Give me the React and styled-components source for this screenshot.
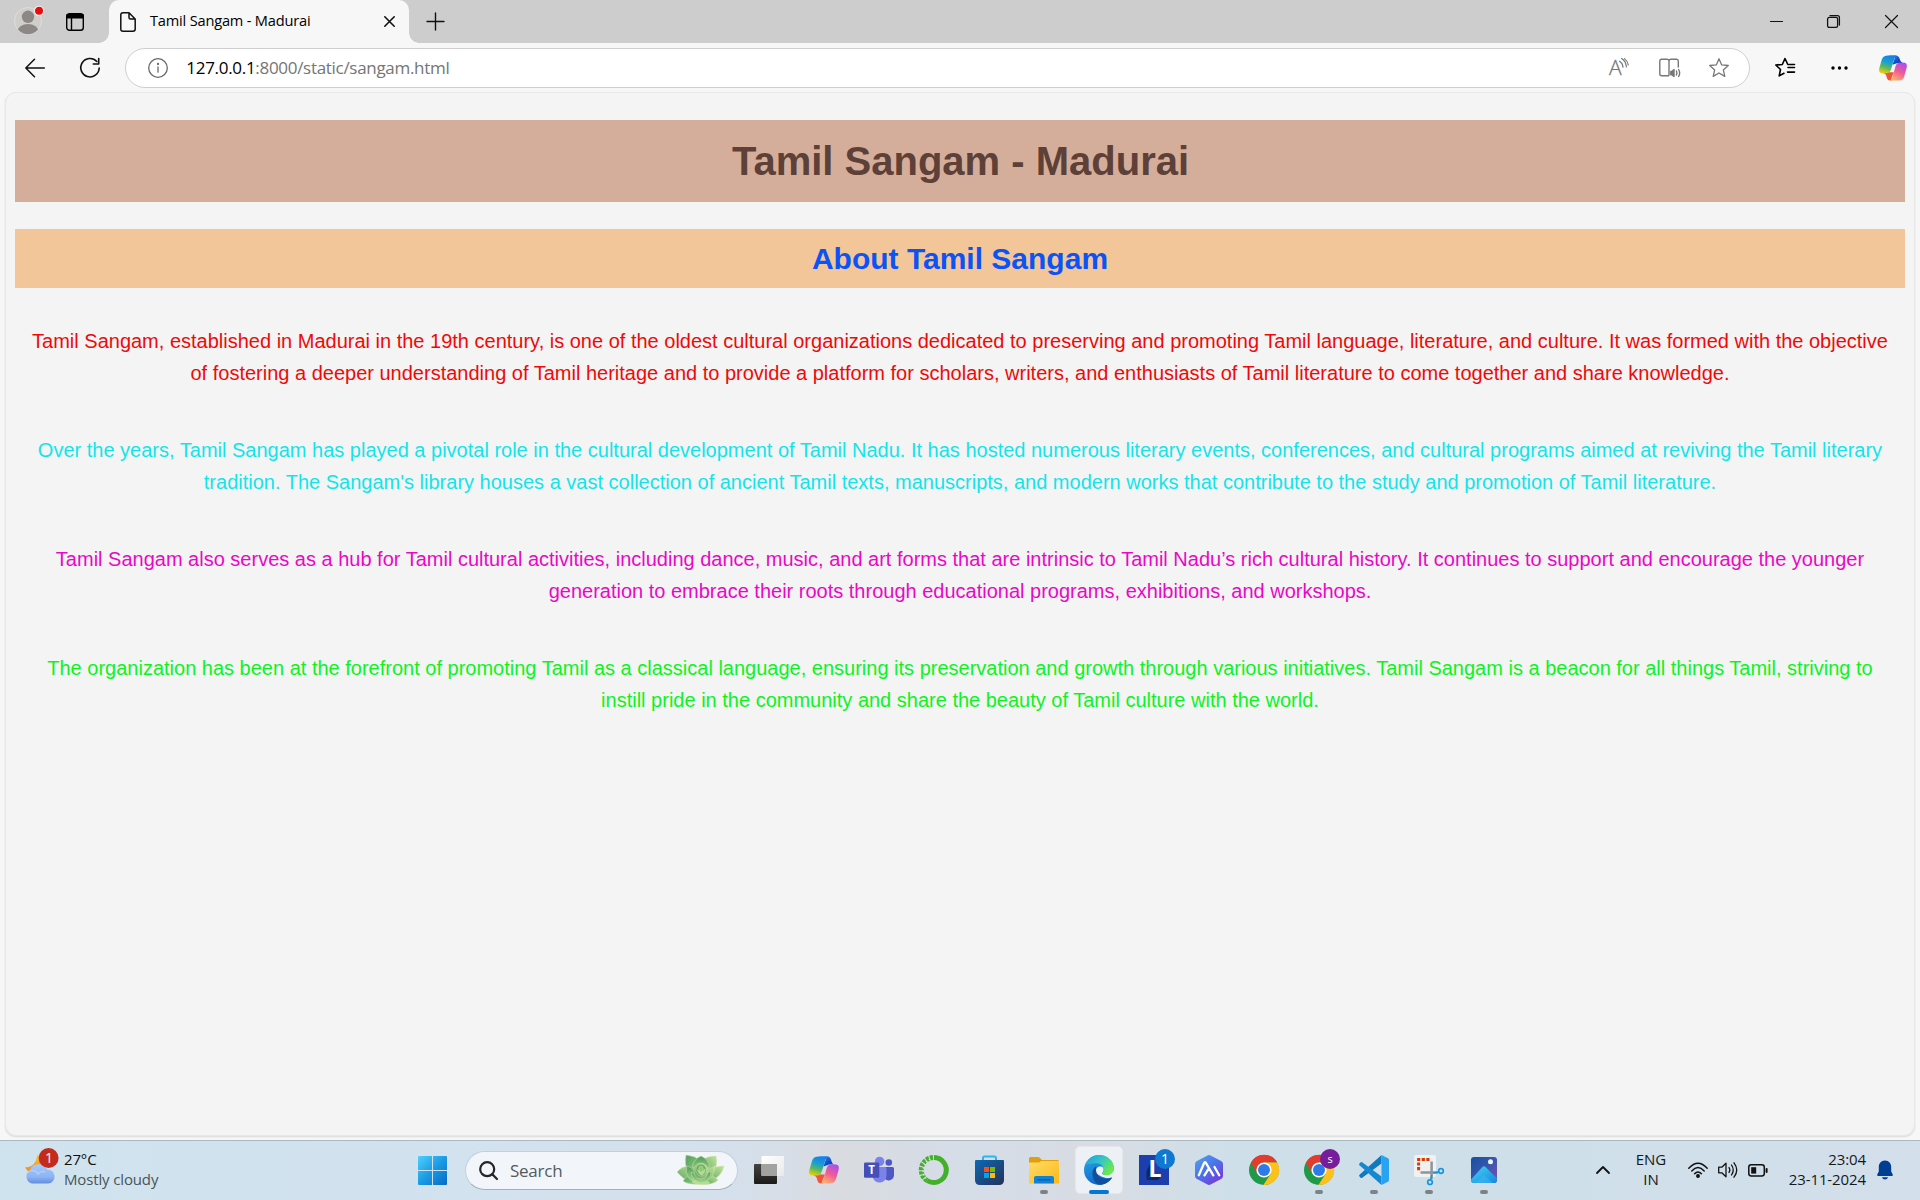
import React from "react";
import styled, { createGlobalStyle } from "styled-components";

const UI_FONT = '"Open Sans", "Noto Sans", sans-serif';

const GlobalStyle = createGlobalStyle`
  * { box-sizing: border-box; }
  body { margin: 0; overflow: hidden; background: #f7f7f7; }
  svg { display: block; flex: none; overflow: visible; }
`;

const Desktop = styled.div`
  width: 1920px;
  height: 1200px;
  display: flex;
  flex-direction: column;
  background: #f7f7f7;
  font-family: ${UI_FONT};
  color: #000;
`;

const TabStrip = styled.header`
  height: 43px;
  display: flex;
  align-items: stretch;
  background: #cdcdcd;
`;

const Cell = styled.div`
  width: ${(p) => p.$w}px;
  flex: none;
  display: flex;
  align-items: center;
  justify-content: center;
`;

const Profile = styled(Cell)`
  margin-left: 7px;
  padding-bottom: 1px;
`;

const Tab = styled.div`
  width: 300px;
  margin-left: 8px;
  padding: 0 14px 0 11px;
  display: flex;
  align-items: center;
  background: #f7f7f7;
  border-radius: 10px 10px 0 0;
  position: relative;
  &::before,
  &::after {
    content: "";
    position: absolute;
    bottom: 0;
    width: 10px;
    height: 10px;
  }
  &::before {
    left: -10px;
    background: radial-gradient(circle at 0 0, transparent 9.5px, #f7f7f7 10px);
  }
  &::after {
    right: -10px;
    background: radial-gradient(circle at 100% 0, transparent 9.5px, #f7f7f7 10px);
  }
`;

const TabTitle = styled.span`
  flex: 1;
  margin-left: 14px;
  padding-bottom: 4px;
  font-size: 14.6px;
  line-height: 20px;
  letter-spacing: -0.19px;
  white-space: nowrap;
`;

const Controls = styled.div`
  margin-left: auto;
  display: flex;
`;

const Toolbar = styled.div`
  height: 49px;
  padding: 0 2px 0 7px;
  display: flex;
  align-items: center;
`;

const AddressBar = styled.div`
  width: 1625px;
  height: 40px;
  flex: none;
  margin: 1px 8px 0 8px;
  padding: 0 5px 0 21.5px;
  display: flex;
  align-items: center;
  background: #fff;
  border: 1px solid #cfcfcf;
  border-radius: 20px;
`;

const Url = styled.span`
  flex: 1;
  margin-left: 18.8px;
  padding-bottom: 1px;
  font-size: 17px;
  line-height: 24px;
  letter-spacing: -0.3px;
  color: #757575;
  white-space: nowrap;
`;

const Host = styled.span`
  color: #000;
`;

const Page = styled.main`
  height: 1044px;
  margin: 0 5px;
  padding: 27px 10px 0;
  background: #f4f4f4;
  border: 1px solid #e8e8e8;
  border-radius: 11px;
  box-shadow: 0 1px 2px rgba(0, 0, 0, 0.12);
  font-family: "Liberation Sans", Arial, sans-serif;
  text-align: center;
`;

const Title = styled.h1`
  margin: 0 -1px 27px;
  padding-left: 1px;
  height: 82px;
  font-size: 40px;
  line-height: 82px;
  color: #5d4037;
  background: #d5ae9b;
`;

const Subtitle = styled.h2`
  margin: 0 -1px 24px;
  height: 59px;
  font-size: 30px;
  line-height: 59px;
  color: #0b53f5;
  background: #f3c69a;
`;

const Paragraph = styled.p`
  margin: 0 0 20px;
  padding: 12.5px 11px;
  font-size: 20px;
  line-height: 32px;
  color: ${(p) => p.$color};
`;

const Taskbar = styled.footer`
  height: 60px;
  margin-top: auto;
  padding-bottom: 1px;
  display: flex;
  align-items: center;
  border-top: 1px solid #a9b8c1;
  background: linear-gradient(90deg, #cfe3ee 0%, #d2e2ee 25%, #d5e0ec 38%, #d9dbe0 44%, #d5dde8 50%, #d8dce3 57%, #cfdfe9 64%, #cfdfea 80%, #d3dfea 100%);
`;

const Weather = styled.div`
  width: 405px;
  flex: none;
  padding: 0 0 6px 25px;
  display: flex;
  align-items: center;
`;

const WeatherText = styled.div`
  margin: 4px 0 0 5px;
  font-size: 15px;
  line-height: 20px;
  color: #4b5459;
  letter-spacing: -0.14px;
`;

const Temp = styled.div`
  color: #111;
`;

const Search = styled.div`
  width: 273px;
  height: 39px;
  flex: none;
  margin: 0 3.5px 0 5px;
  padding: 0 13px 0 12.5px;
  display: flex;
  align-items: center;
  border: 1px solid #c3d0dc;
  border-bottom-color: #a3b0bc;
  border-radius: 20px;
  background: #f2f6fa;
`;

const SearchText = styled.span`
  flex: 1;
  margin-left: 12.5px;
  padding-top: 1px;
  font-size: 17px;
  line-height: 24px;
  letter-spacing: -0.25px;
  color: #555a5e;
`;

const AppButton = styled.div`
  width: 55px;
  height: 58px;
  flex: none;
  display: flex;
  align-items: center;
  justify-content: center;
  position: relative;
`;

const Active = styled.div`
  width: 48px;
  height: 48px;
  display: flex;
  align-items: center;
  justify-content: center;
  border-radius: 5px;
  background: #edf0f4;
  border: 1px solid #e4e7eb;
`;

const Indicator = styled.span`
  position: absolute;
  left: 50%;
  bottom: 5px;
  width: ${(p) => (p.$active ? 20 : 8)}px;
  height: 4px;
  border-radius: 2px;
  transform: translateX(-50%);
  background: ${(p) => (p.$active ? "#0078d4" : "#7c8388")};
`;

const Badge = styled.span`
  position: absolute;
  left: ${(p) => p.$x}px;
  top: 8px;
  width: 20px;
  height: 20px;
  border-radius: 50%;
  background: ${(p) => p.$bg};
  color: #fff;
  font-size: ${(p) => p.$size}px;
  line-height: 19px;
  text-align: center;
`;

const Tray = styled.div`
  margin-left: auto;
  padding-right: 16px;
  display: flex;
  align-items: center;
`;

const TrayText = styled.div`
  width: ${(p) => p.$w}px;
  padding-bottom: 2px;
  text-align: ${(p) => p.$align};
  font-size: 15px;
  line-height: 20px;
  letter-spacing: ${(p) => p.$ls || 0}px;
  color: #16191c;
  white-space: nowrap;
`;

const Language = styled(Cell)`
  margin: 0 9px 0 13px;
`;

const TrayIcons = styled.div`
  display: flex;
  align-items: center;
  gap: 10px;
  margin-right: 18px;
`;

const Line = ({ w = 20, h = w, c = "#111", s = 1.3, box = `0 0 ${w} ${h}`, children }) => (
  <svg width={w} height={h} viewBox={box} fill="none" stroke={c} strokeWidth={s} strokeLinecap="round" strokeLinejoin="round">
    {children}
  </svg>
);

const Avatar = () => (
  <svg width="30" height="30" viewBox="0 0 30 30">
    <defs><clipPath id="av"><circle cx="15" cy="15" r="13.2" /></clipPath></defs>
    <circle cx="15" cy="15" r="13.5" fill="#d0cecb" stroke="#e0deda" />
    <g clipPath="url(#av)" fill="#8c8885"><circle cx="15" cy="10.8" r="6.2" /><ellipse cx="15" cy="25.5" rx="10.5" ry="7.5" /></g>
    <circle cx="26" cy="4.8" r="4.6" fill="#e80c0c" stroke="#ededed" strokeWidth="1.2" />
  </svg>
);

const Copilot = ({ size, id }) => (
  <svg width={size} height={size} viewBox="0 0 30 30">
    <defs>
      <linearGradient id={id + "a"} x1="0.5" y1="0" x2="0.2" y2="1"><stop offset="0" stopColor="#1a7fe8" /><stop offset=".35" stopColor="#16a0d0" /><stop offset=".65" stopColor="#5cb860" /><stop offset="1" stopColor="#f7d000" /></linearGradient>
      <linearGradient id={id + "b"} x1="0.8" y1="0" x2="0.3" y2="1"><stop offset="0" stopColor="#a94df0" /><stop offset=".5" stopColor="#ef5b97" /><stop offset="1" stopColor="#ffb368" /></linearGradient>
      <linearGradient id={id + "c"} x1="0" y1="0" x2="1" y2="1"><stop offset="0" stopColor="#18a4f4" /><stop offset=".6" stopColor="#1748c8" /><stop offset="1" stopColor="#1c3fb8" /></linearGradient>
    </defs>
    <path d="M6.5 19.5H16L14 24C13 26.5 13 28.5 14.5 28.5H12C9.5 28.5 8.6 26.5 8 24Q7.2 20.5 4.5 20.5Z" fill="#f2543a" />
    <path d="M10 1.5H18.5C21 1.5 22 4 22.6 6.5Q23.3 9.4 26 9.6H20L14.5 11.5 17 4Z" fill={`url(#${id}c)`} />
    <path d="M10 1.5H19C17.3 2 16.7 4 15.8 7L12.8 16.5C11.9 19.7 10.3 20.6 7.5 20.6H3.5C.5 20.6-.4 18.5.4 15L3 6C4 2.8 6 1.5 10 1.5Z" fill={`url(#${id}a)`} />
    <path d="M20 28.5H11C13.5 28 14 26 14.7 23.5L17.6 13.5C18.5 10.3 20 9.4 22.5 9.4H26.5C29.5 9.4 30.4 11.5 29.6 15L27 24C26 27.2 24 28.5 20 28.5Z" fill={`url(#${id}b)`} />
  </svg>
);

const CloudMoon = () => (
  <svg width="34" height="38" viewBox="0 0 34 38">
    <defs>
      <linearGradient id="cl" x1="0" y1="0" x2="0" y2="1"><stop offset="0" stopColor="#a8cbfa" /><stop offset=".65" stopColor="#8db4f4" /><stop offset="1" stopColor="#648de0" /></linearGradient>
      <linearGradient id="mn" x1="0" y1="0" x2="0" y2="1"><stop offset="0" stopColor="#f7c33c" /><stop offset="1" stopColor="#ef8a1d" /></linearGradient>
    </defs>
    <path d="M12 7C12 14 7 20 0 19.3C2 24 7 26 12 24C18 22 21 16 18 11Q16 8 12 7Z" fill="url(#mn)" />
    <path d="M7.5 35.5A7 7 0 0 1 5 22.5C7 14.5 20 14.5 22.3 21.5A7 7 0 0 1 23 35.5Z" fill="url(#cl)" />
    <path d="M2 25C5 21 11 22 13 26Q16 22.5 20 24" fill="none" stroke="#b9d5fb" strokeWidth="1.6" opacity=".7" />
    <circle cx="23.6" cy="10" r="10" fill="#c42b1c" />
    <text x="24" y="15" fontSize="14" fill="#fff" textAnchor="middle" fontFamily="Open Sans">1</text>
  </svg>
);

const WindowsLogo = () => (
  <svg width="29" height="29" viewBox="0 0 29 29">
    <defs><linearGradient id="wl" gradientUnits="userSpaceOnUse" x1="0" y1="0" x2="29" y2="29"><stop offset="0" stopColor="#4fd0fb" /><stop offset=".5" stopColor="#1b9be4" /><stop offset="1" stopColor="#0669c8" /></linearGradient></defs>
    <path fill="url(#wl)" d="M1 0H14V14H0V1Q0 0 1 0ZM15 0H28Q29 0 29 1V14H15ZM0 15H14V29H1Q0 29 0 28ZM15 15H29V28Q29 29 28 29H15Z" />
  </svg>
);

const Succulent = () => (
  <svg width="47" height="31" viewBox="0 0 47 31">
    <defs>
      <linearGradient id="s1" x1="0" y1="0" x2="1" y2="1"><stop offset="0" stopColor="#4f9c62" /><stop offset="1" stopColor="#9ad283" /></linearGradient>
      <linearGradient id="s2" x1="1" y1="0" x2="0" y2="1"><stop offset="0" stopColor="#c0e49a" /><stop offset="1" stopColor="#5ba464" /></linearGradient>
      <linearGradient id="s3" x1="0" y1="0" x2="0" y2="1"><stop offset="0" stopColor="#4f9a5b" /><stop offset="1" stopColor="#a5d78b" /></linearGradient>
    </defs>
    <g stroke="#cfe3a0" strokeWidth=".5">
      <path d="M0 17Q5 11 13 11L20 20 13 27Q6 24 0 17Z" fill="url(#s2)" />
      <path d="M47 11Q45 21 34 26L28 18Q36 11 47 11Z" fill="url(#s2)" />
      <path d="M6 26Q10 19 20 20L22 29Q12 30 6 26Z" fill="url(#s1)" />
      <path d="M41 25Q36 30 27 29L28 21Q36 19 41 25Z" fill="url(#s2)" />
      <path d="M15 27Q24 20 33 28Q24 32 15 27Z" fill="#b3dd92" />
      <path d="M9 0Q18 1 23 5L19 19 11 17Q7 9 9 0Z" fill="url(#s1)" />
      <path d="M39 1Q41 10 36 19L27 15 25 5Q31 1 39 1Z" fill="url(#s2)" />
      <path d="M24 1Q31 4 33 12L24 17 15 12Q17 4 24 1Z" fill="url(#s3)" />
      <path d="M10 11Q18 13 23 25Q15 28 11 22Q8 17 10 11Z" fill="url(#s3)" />
      <path d="M38 11Q38 24 27 26L24 21Q30 13 38 11Z" fill="url(#s2)" />
      <path d="M14 17Q19 20 24 20Q30 20 34 16Q33 28 24 28Q16 27 14 17Z" fill="url(#s3)" />
      <path d="M17 14Q16 23 24 24Q32 23 31 13Q28 8 24 8Q19 8 17 14Z" fill="url(#s2)" />
      <ellipse cx="24" cy="15" rx="5.2" ry="6" fill="#67ad66" />
      <path d="M20.5 15Q22 20 25 20Q28 18 28 14Q26 18 20.5 15Z" fill="#aedb8e" />
      <ellipse cx="24" cy="14" rx="2.3" ry="3" fill="#8cc777" />
    </g>
  </svg>
);

const TaskView = () => (
  <svg width="30" height="30" viewBox="0 0 30 30">
    <defs>
      <linearGradient id="tb" x1="0" y1="0" x2="0" y2="1"><stop offset="0" stopColor="#444340" /><stop offset="1" stopColor="#1c1b1b" /></linearGradient>
      <linearGradient id="tw" x1="0" y1="0" x2="1" y2="1"><stop offset="0" stopColor="#fff" /><stop offset="1" stopColor="#e9e9e9" /></linearGradient>
    </defs>
    <rect x="0" y="9" width="23" height="20" rx="1" fill="url(#tb)" />
    <rect x="7.5" y="1" width="22.5" height="20" rx="1" fill="url(#tw)" />
    <path d="M7.5 9H23V21H8.5Q7.5 21 7.5 20Z" fill="#a2a2a1" />
  </svg>
);

const Teams = () => (
  <svg width="30" height="30" viewBox="0 0 30 30">
    <circle cx="24.8" cy="7.5" r="3.3" fill="#4f57c5" /><path d="M20 12H28.5Q30 12 30 13.5V20.5A5.5 5.5 0 0 1 20 23Z" fill="#4f57c5" />
    <circle cx="15.6" cy="6.4" r="4.7" fill="#7b83eb" /><path d="M9 12H21Q22.5 12 22.5 13.5V21A7 7 0 0 1 9 23Z" fill="#7b83eb" />
    <rect x="0" y="7.5" width="15.3" height="15.3" rx="1.3" fill="#464eb8" />
    <text x="7.7" y="19" fill="#fff" fontSize="11.5" fontWeight="700" textAnchor="middle" fontFamily="Open Sans">T</text>
  </svg>
);

const Anaconda = () => (
  <svg width="30" height="30" viewBox="0 0 30 30" fill="none" stroke="#43b02a">
    <path d="M15 2.5A12.5 12.5 0 1 1 8 25.5" strokeWidth="5" />
    <path d="M8 25.5A12.5 12.5 0 0 1 15 2.5" strokeWidth="5" strokeDasharray="3 1" />
    <path d="M7 23.5A12.5 12.5 0 0 1 13 3.5" strokeWidth="1.5" stroke="#d6dce3" strokeDasharray="1.5 2" />
  </svg>
);

const Store = () => (
  <svg width="29" height="30" viewBox="0 0 29 30">
    <defs><linearGradient id="st" x1="0" y1="0" x2="1" y2="1"><stop offset="0" stopColor="#0e68b4" /><stop offset="1" stopColor="#243258" /></linearGradient></defs>
    <path d="M8 6V3Q8 1.5 9.5 1.5H19.5Q21 1.5 21 3V6" fill="none" stroke="#25b8f0" strokeWidth="2" />
    <path d="M0 6Q0 5 1 5H28Q29 5 29 6V25Q29 30 24 30H5Q0 30 0 25Z" fill="url(#st)" />
    <path d="M9 12H14V17H9Z" fill="#f25022" /><path d="M15 12H20V17H15Z" fill="#7fba00" /><path d="M9 18H14V23H9Z" fill="#00a4ef" /><path d="M15 18H20V23H15Z" fill="#ffb900" />
  </svg>
);

const Folder = () => (
  <svg width="30" height="30" viewBox="0 0 30 30">
    <defs><linearGradient id="fo" x1="0" y1="0" x2="1" y2="1"><stop offset="0" stopColor="#ffdc69" /><stop offset="1" stopColor="#fbb917" /></linearGradient></defs>
    <path d="M0 3.5Q0 2 1.5 2H9Q10 2 11 3L13 5H28.5Q30 5 30 6.5V10H0Z" fill="#e09f0c" />
    <path d="M0 7.5H9Q11 7.5 12 6H30V28.5H0Z" fill="url(#fo)" />
    <path d="M5 28.5V23Q5 21 7 21H23Q25 21 25 23V28.5Z" fill="#1282d4" /><path d="M8.5 24.8H21.5" stroke="#0a58a0" strokeWidth="1.2" />
  </svg>
);

const Edge = () => (
  <svg width="30" height="30" viewBox="0 0 30 30">
    <defs>
      <linearGradient id="e1" x1="0" y1="0" x2="1" y2=".6"><stop offset="0" stopColor="#2199d8" /><stop offset=".5" stopColor="#33c3cc" /><stop offset="1" stopColor="#6aeb48" /></linearGradient>
      <linearGradient id="e2" x1="0" y1="0" x2=".4" y2="1"><stop offset="0" stopColor="#2aa9e6" /><stop offset="1" stopColor="#0b68cc" /></linearGradient>
    </defs>
    <circle cx="15" cy="15" r="15" fill="url(#e2)" />
    <path d="M12 18C11 13 14.5 10.5 18.5 12C21 14 19 17 18.2 18.3C18 21 30 21.5 30 12.5L33 14 28.5 22.5Q20 25 12 18Z" fill="#edf0f4" />
    <path d="M1 10.5C4 3.5 9 0 15 0C23.5 0 30 6 30 13C30 18 26 20.2 22.5 20.2C19.5 20.2 18 19.2 18.2 18.3C21.5 15 19.5 8.5 12.5 8.3C7.5 8 3.5 9 1 10.5Z" fill="url(#e1)" />
    <path d="M8.5 18C8.5 14.5 10.4 12.4 12.3 11.6C10.5 17.5 15 24.4 22 24C25 23.8 26.5 22.4 27.6 22.5C28.2 22.6 27.5 23.6 27 24.2C22 30 16 30.5 13.5 29C10.5 27.3 8.5 23 8.5 18Z" fill="#104f9e" />
  </svg>
);

const LApp = () => (
  <svg width="30" height="30" viewBox="0 0 30 30">
    <rect width="30" height="30" fill="#1d3fae" /><path d="M11 9V20L7.5 25V16ZM7.5 25L11 21.5H22L19 25Z" fill="#12265e" />
    <text x="9.4" y="22" fill="#fff" fontSize="23" fontWeight="700" fontFamily="Open Sans" textLength="13" lengthAdjust="spacingAndGlyphs">L</text>
  </svg>
);

const Hex = () => (
  <svg width="28" height="30" viewBox="0 0 28 30">
    <defs><linearGradient id="hx" x1="0" y1="0" x2=".8" y2="1"><stop offset="0" stopColor="#55a5e6" /><stop offset=".5" stopColor="#4a74ec" /><stop offset="1" stopColor="#7a36d8" /></linearGradient></defs>
    <path d="M12 .7Q14-.6 16 .7L26.5 6.3Q28 7.2 28 9V21Q28 22.8 26.5 23.7L16 29.3Q14 30.6 12 29.3L1.5 23.7Q0 22.8 0 21V9Q0 7.2 1.5 6.3Z" fill="url(#hx)" />
    <path d="M3.8 20.3L9.2 7.8Q10 6.5 10.9 7.8L18.3 20.3M9.5 20.3L14 13.2M19.5 12L24.2 20.3" fill="none" stroke="#fff" strokeWidth="2.3" strokeLinecap="round" />
  </svg>
);

const Chrome = () => (
  <svg width="30" height="30" viewBox="0 0 30 30">
    <circle cx="15" cy="15" r="15" fill="#1e9a48" />
    <path d="M15 7.3H28.1A15 15 0 0 1 14.4 30L21.7 18.8Z" fill="#fcc21b" />
    <path d="M2 7.5A15 15 0 0 1 28.1 7.3H15L8.3 18.8Z" fill="#e33b2e" />
    <circle cx="15" cy="15" r="7.6" fill="#fff" /><circle cx="15" cy="15" r="6" fill="#2f7ae9" />
  </svg>
);

const VSCode = () => (
  <svg width="30" height="30" viewBox="0 0 30 30">
    <path d="M22.5 0L22.5 8.5 3.2 22.8Q2.4 23.3 1.6 22.7L.5 21.6Q-.4 20.7.5 19.8Z" fill="#1078bd" />
    <path d="M22.5 30L22.5 21.5 3.2 7.2Q2.4 6.7 1.6 7.3L.5 8.4Q-.4 9.3.5 10.2Z" fill="#1488d2" />
    <path d="M22.5 .1L29 3.2Q30 3.8 30 5V25Q30 26.2 29 26.8L22.5 29.9Z" fill="#27a3f1" />
  </svg>
);

const Snip = () => (
  <svg width="30" height="30" viewBox="0 0 30 30">
    <rect x="0" y="0" width="22" height="22" rx="2" fill="#eff1f3" />
    <path d="M15.5 4.5H4.6V16" fill="none" stroke="#d83b01" strokeWidth="3" strokeDasharray="3.2 1.4" />
    <path d="M6.5 17.6H24M17.6 6.5V24" stroke="#8b959c" strokeWidth="2.5" />
    <circle cx="27" cy="16" r="2.3" fill="none" stroke="#1897dc" strokeWidth="1.7" /><circle cx="16" cy="27.2" r="2.3" fill="none" stroke="#1897dc" strokeWidth="1.7" />
    <path d="M19.5 18L25 17M17.8 20L16.5 25" stroke="#1897dc" strokeWidth="1.4" />
  </svg>
);

const Photos = () => (
  <svg width="26" height="26" viewBox="0 0 26 26">
    <defs>
      <linearGradient id="ph" x1="0" y1="0" x2="1" y2="1"><stop offset="0" stopColor="#174fa3" /><stop offset=".5" stopColor="#3857ad" /><stop offset="1" stopColor="#8a4cae" /></linearGradient>
      <linearGradient id="pm" x1="0" y1="0" x2="1" y2="1"><stop offset="0" stopColor="#45d5f4" /><stop offset="1" stopColor="#1585df" /></linearGradient>
    </defs>
    <rect width="26" height="26" rx="3" fill="url(#ph)" /><circle cx="19.5" cy="4.7" r="2.5" fill="#f2f5ff" />
    <path d="M0 22.5L11.2 10.2Q13 8.5 14.8 10.2L26 21.5V23Q26 26 23 26H3Q0 26 0 23Z" fill="url(#pm)" />
    <path d="M5 26L12 18.5Q13 17.5 14 18.5L21.5 26Z" fill="#38b8f2" opacity=".6" />
  </svg>
);

const STAR = "M10 .8L12.7 6.9 19.3 7.5 14.3 11.9 15.8 18.4 10 15 4.2 18.4 5.7 11.9 .7 7.5 7.3 6.9Z";

const APPS = [
  { id: "task-view", icon: <TaskView /> },
  { id: "copilot", icon: <Copilot size={30} id="cpt" /> },
  { id: "teams", icon: <Teams /> },
  { id: "anaconda", icon: <Anaconda /> },
  { id: "store", icon: <Store /> },
  { id: "explorer", icon: <Folder />, running: true },
  { id: "edge", icon: <Edge />, running: true, active: true },
  { id: "l", icon: <LApp />, badge: { text: "1", bg: "#0f78d0", x: 28.5, size: 14 } },
  { id: "hex", icon: <Hex /> },
  { id: "chrome", icon: <Chrome /> },
  { id: "chrome-s", icon: <Chrome />, running: true, badge: { text: "s", bg: "#761c9c", x: 28.5, size: 11 } },
  { id: "vscode", icon: <VSCode />, running: true },
  { id: "snip", icon: <Snip />, running: true },
  { id: "photos", icon: <Photos />, running: true },
];

const PARAGRAPHS = [
  ["#ee0a0a", "Tamil Sangam, established in Madurai in the 19th century, is one of the oldest cultural organizations dedicated to preserving and promoting Tamil language, literature, and culture. It was formed with the objective of fostering a deeper understanding of Tamil heritage and to provide a platform for scholars, writers, and enthusiasts of Tamil literature to come together and share knowledge."],
  ["#12e4ea", "Over the years, Tamil Sangam has played a pivotal role in the cultural development of Tamil Nadu. It has hosted numerous literary events, conferences, and cultural programs aimed at reviving the Tamil literary tradition. The Sangam's library houses a vast collection of ancient Tamil texts, manuscripts, and modern works that contribute to the study and promotion of Tamil literature."],
  ["#e908c6", "Tamil Sangam also serves as a hub for Tamil cultural activities, including dance, music, and art forms that are intrinsic to Tamil Nadu’s rich cultural history. It continues to support and encourage the younger generation to embrace their roots through educational programs, exhibitions, and workshops."],
  ["#0cf31f", "The organization has been at the forefront of promoting Tamil as a classical language, ensuring its preservation and growth through various initiatives. Tamil Sangam is a beacon for all things Tamil, striving to instill pride in the community and share the beauty of Tamil culture with the world."],
];

export default function App() {
  return (
    <Desktop>
      <GlobalStyle />
      <TabStrip>
        <Profile $w={42}><Avatar /></Profile>
        <Cell $w={52}>
          <Line w={18} c="#000" s={1.4}><rect x=".7" y=".7" width="16.6" height="16.6" rx="2.8" /><path d="M1 1.8H17V4.8H1ZM5.5 5V17" fill="#000" /></Line>
        </Cell>
        <Tab>
          <Line w={16} h={20} s={1.5}><path d="M3 .8H9L15.2 7V17Q15.2 19.2 13 19.2H3Q.8 19.2.8 17V3Q.8.8 3 .8ZM9 1V5.5Q9 7 10.5 7H15" /></Line>
          <TabTitle>Tamil Sangam - Madurai</TabTitle>
          <Line w={11} s={1.6}><path d="M.8.8L10.2 10.2M10.2.8L.8 10.2" /></Line>
        </Tab>
        <Cell $w={53}><Line w={17} s={1.4}><path d="M8.5 0V17M0 8.5H17" /></Line></Cell>
        <Controls>
          <Cell $w={57}><Line w={13} s={1.2}><path d="M.5 6.5H12.5" /></Line></Cell>
          <Cell $w={57}><Line w={13} s={1.3}><rect x=".6" y="2.4" width="10" height="10" rx="1.6" /><path d="M3 .6H10.5Q12.4.6 12.4 2.5V10" /></Line></Cell>
          <Cell $w={58}><Line w={13} s={1.2}><path d="M.5.5L12.5 12.5M12.5.5L.5 12.5" /></Line></Cell>
        </Controls>
      </TabStrip>

      <Toolbar>
        <Cell $w={55}><Line w={20} s={1.5}><path d="M19.3 10H.8M9.5 1.3L.8 10 9.5 18.7" /></Line></Cell>
        <Cell $w={55}><Line w={20} s={1.6}><path d="M16.8 3.5A9.2 9.2 0 1 0 19.2 10M18.7.6V6H13.3" /></Line></Cell>
        <AddressBar>
          <Line w={20} c="#6a6a6a"><circle cx="10" cy="10" r="9.3" /><path d="M10 9V14.2" /><circle cx="10" cy="6" r=".5" fill="#6a6a6a" /></Line>
          <Url><Host>127.0.0.1</Host>:8000/static/sangam.html</Url>
          <Cell $w={50}>
            <Line w={20} c="#777" s={1.3}><text x="0" y="17.3" fontSize="21" fill="#777" stroke="#777" strokeWidth=".3" fontFamily="Open Sans" fontWeight="300">A</text><path d="M10.6 3.2Q13.6 5 14 9.2M12.6.4Q17 3 17.4 9M15.5.6Q18.6 3 19.3 7" strokeWidth="1.2" /></Line>
          </Cell>
          <Cell $w={50}>
            <Line w={21} h={20} c="#777" s={1.4}><path d="M9.5 17.8H2.5Q.8 17.8.8 16.1V3Q.8 1.2 2.5 1.2H8.3Q10 1.2 10 3V17.3M10 3Q10 1.2 11.8 1.2H17.6Q19.3 1.2 19.3 3V9" /><path d="M11.8 13.5H12.8L15 11.5V18.5L12.8 16.8H11.8Z" fill="#777" /><path d="M17.4 13Q18.4 15 17.4 17M19.6 11.5Q21.7 15 19.6 18.5" /></Line>
          </Cell>
          <Cell $w={50}><Line w={20} c="#777"><path d={STAR} /></Line></Cell>
        </AddressBar>
        <Cell $w={54}><Line w={20} c="#000" s={1.6}><path d="M13.5 6.8H12.8L10 .8 7.3 6.8.8 7.3 5.5 11.8 4.2 18.2 9 15.6M13 6.8M13 9.8H19.5M12.5 5.8M12.5 14.4H19.5M14.5 6.8H19.5" transform="translate(0 -.3)" /></Line></Cell>
        <Cell $w={55}><svg width="17" height="4" viewBox="0 0 17 4"><circle cx="2" cy="2" r="1.7" /><circle cx="8.5" cy="2" r="1.7" /><circle cx="15" cy="2" r="1.7" /></svg></Cell>
        <Cell $w={51}><Copilot size={28} id="cpb" /></Cell>
      </Toolbar>

      <Page>
        <Title>Tamil Sangam - Madurai</Title>
        <Subtitle>About Tamil Sangam</Subtitle>
        {PARAGRAPHS.map(([color, text]) => <Paragraph key={color} $color={color}>{text}</Paragraph>)}
      </Page>

      <Taskbar>
        <Weather>
          <CloudMoon />
          <WeatherText><Temp>27°C</Temp>Mostly cloudy</WeatherText>
        </Weather>
        <AppButton><WindowsLogo /></AppButton>
        <Search>
          <Line w={19} c="#252525" s={2.2}><circle cx="8.2" cy="8.2" r="7" /><path d="M13.4 13.4L18 18" /></Line>
          <SearchText>Search</SearchText>
          <Succulent />
        </Search>
        {APPS.map((a) => (
          <AppButton key={a.id}>
            {a.active ? <Active>{a.icon}</Active> : a.icon}
            {a.badge && <Badge $bg={a.badge.bg} $x={a.badge.x} $size={a.badge.size}>{a.badge.text}</Badge>}
            {a.running && <Indicator $active={a.active} />}
          </AppButton>
        ))}
        <Tray>
          <Line w={14} h={8} s={1.8}><path d="M1 7L7 1 13 7" /></Line>
          <Language $w={56}><TrayText $w={40} $align="center">ENG<br />IN</TrayText></Language>
          <TrayIcons>
            <Line w={20} h={16} s={1.5}><path d="M.8 6.2Q10-3.8 19.2 6.2M3.8 9Q10 2.2 16.2 9M6.6 11.8Q10 8 13.4 11.8" /><circle cx="10" cy="14" r="1.2" fill="#111" /></Line>
            <Line w={20} h={16}><path d="M.7 5.2H3.8L8 1.2V14.8L3.8 10.8H.7ZM11 5.5Q12.7 8 11 10.5M13.5 3Q17 8 13.5 13M16 .8Q21.5 8 16 15.2" /></Line>
            <Line w={20} h={13} s={1.5}><rect x=".8" y=".8" width="15.5" height="11.2" rx="2.4" /><rect x="3.2" y="3.2" width="5" height="6.4" fill="#111" stroke="none" /><path d="M18.6 5V8" strokeWidth="2" /></Line>
          </TrayIcons>
          <TrayText $w={80} $align="right" $ls={-0.1}>23:04<br />23-11-2024</TrayText>
          <Cell $w={38}>
            <svg width="16" height="20" viewBox="0 0 16 20" fill="#003e92"><path d="M8 .5C4 .5 1.8 3.5 1.8 7V11.5L.2 14.5Q0 16 1.2 16H14.8Q16 16 15.8 14.5L14.2 11.5V7C14.2 3.5 12 .5 8 .5ZM5 17.3H11Q10.5 19.5 8 19.5Q5.5 19.5 5 17.3Z" /></svg>
          </Cell>
        </Tray>
      </Taskbar>
    </Desktop>
  );
}
